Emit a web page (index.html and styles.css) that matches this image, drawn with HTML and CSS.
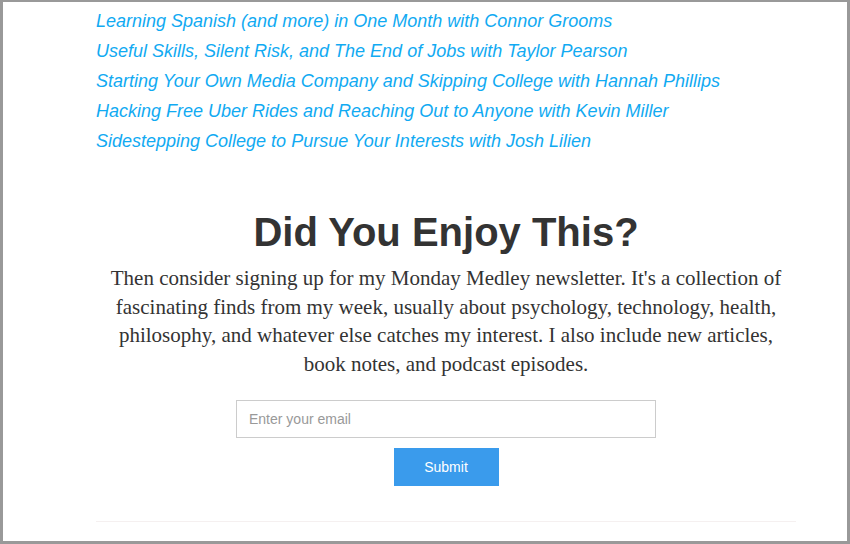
FILE: index.html
```html
<!DOCTYPE html>
<html lang="en">
<head>
<meta charset="utf-8">
<title>Did You Enjoy This?</title>
<link rel="stylesheet" href="styles.css">
</head>
<body>
<div class="frame">
  <div class="content">
    <ul class="related">
      <li><a href="#">Learning Spanish (and more) in One Month with Connor Grooms</a></li>
      <li><a href="#">Useful Skills, Silent Risk, and The End of Jobs with Taylor Pearson</a></li>
      <li><a href="#">Starting Your Own Media Company and Skipping College with Hannah Phillips</a></li>
      <li><a href="#">Hacking Free Uber Rides and Reaching Out to Anyone with Kevin Miller</a></li>
      <li><a href="#">Sidestepping College to Pursue Your Interests with Josh Lilien</a></li>
    </ul>
    <section class="signup">
      <h2 class="signup-title">Did You Enjoy This?</h2>
      <p class="signup-text">Then consider signing up for my Monday Medley newsletter. It's a collection of fascinating finds from my week, usually about psychology, technology, health, philosophy, and whatever else catches my interest. I also include new articles, book notes, and podcast episodes.</p>
      <form class="signup-form" onsubmit="return false;">
        <input class="email" type="email" placeholder="Enter your email">
        <button class="submit" type="submit">Submit</button>
      </form>
    </section>
    <hr class="rule">
  </div>
</div>
</body>
</html>
```

FILE: styles.css
```css
html, body {
  margin: 0;
  padding: 0;
  background: #fff;
}
.frame {
  box-sizing: border-box;
  width: 850px;
  height: 544px;
  border-style: solid;
  border-color: #999;
  border-width: 2px 3px 3px 3px;
  background: #fff;
  overflow: hidden;
}
.content {
  width: 700px;
  margin-left: 93px;
}
.related {
  list-style: none;
  margin: 0;
  padding: 4px 0 0 0;
}
.related li {
  font-family: "Liberation Sans", Arial, sans-serif;
  font-style: italic;
  font-size: 18px;
  line-height: 30px;
}
.related a {
  color: #11aaf2;
  text-decoration: none;
}
.signup {
  text-align: center;
}
.signup-title {
  font-family: "Liberation Sans", Arial, sans-serif;
  font-weight: bold;
  font-size: 40px;
  line-height: 46px;
  color: #333;
  margin: 53px 0 9px 0;
}
.signup-text {
  font-family: "Liberation Serif", "Times New Roman", serif;
  font-size: 21px;
  line-height: 28.5px;
  color: #333;
  margin: 0 auto;
  width: 690px;
}
.signup-form {
  display: flex;
  flex-direction: column;
  align-items: center;
  gap: 10px;
  margin-top: 22px;
}
.email {
  box-sizing: border-box;
  width: 420px;
  height: 38px;
  border: 1px solid #ccc;
  padding: 0 12px;
  font-family: "Liberation Sans", Arial, sans-serif;
  font-size: 14px;
  color: #333;
  outline: none;
}
.email::placeholder {
  color: #999;
}
.submit {
  width: 105px;
  height: 38px;
  border: 0;
  background: #3a9bec;
  color: #fff;
  font-family: "Liberation Sans", Arial, sans-serif;
  font-size: 14px;
  padding: 0;
}
.rule {
  border: 0;
  border-top: 1px solid #f5f0f0;
  margin: 35px 0 0 0;
}
```
